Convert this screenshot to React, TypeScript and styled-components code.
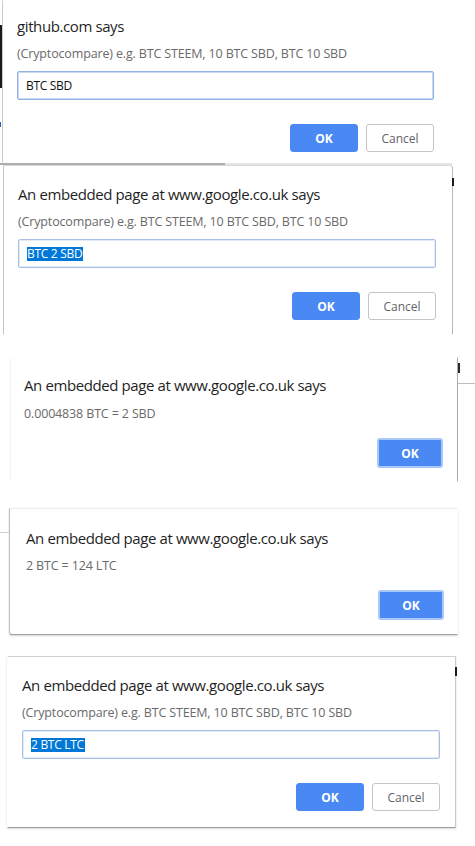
import React from 'react';
import styled, { createGlobalStyle } from 'styled-components';

const GlobalStyle = createGlobalStyle`
  html, body { margin: 0; padding: 0; background: #ffffff; }
  body { font-family: "Open Sans", "Noto Sans", sans-serif; }
`;

const Page = styled.div`
  width: 475px;
  height: 846px;
  overflow: hidden;
  background: #ffffff;
  display: flex;
  flex-direction: column;
`;

type DialogProps = {
  $x: number;
  $w: number;
  $pt: number;
  $pr: number;
  $pb: number;
  $pl: number;
  $mt?: number;
  $bt?: string;
  $br?: string;
  $bb?: string;
  $bl?: string;
  $radius?: string;
  $shadow?: string;
};

const Dialog = styled.div<DialogProps>`
  position: relative;
  flex-shrink: 0;
  box-sizing: border-box;
  display: flex;
  flex-direction: column;
  margin-left: ${(p) => p.$x}px;
  margin-top: ${(p) => p.$mt ?? 0}px;
  width: ${(p) => p.$w}px;
  padding: ${(p) => `${p.$pt}px ${p.$pr}px ${p.$pb}px ${p.$pl}px`};
  border: 1px solid transparent;
  border-color: ${(p) =>
    `${p.$bt ?? 'transparent'} ${p.$br ?? 'transparent'} ${p.$bb ?? 'transparent'} ${p.$bl ?? 'transparent'}`};
  border-radius: ${(p) => p.$radius ?? '0'};
  box-shadow: ${(p) => p.$shadow ?? 'none'};
  background: #ffffff;
`;

const Title = styled.div`
  font-size: 15px;
  letter-spacing: -0.4px;
  line-height: 20px;
  height: 20px;
  color: #1f1f1f;
  white-space: nowrap;
`;

const Message = styled.div<{ $mt: number }>`
  margin-top: ${(p) => p.$mt}px;
  font-size: 12.5px;
  letter-spacing: -0.15px;
  line-height: 18px;
  height: 18px;
  color: #6a6a6a;
  white-space: nowrap;
`;

const Field = styled.div<{ $strong?: boolean }>`
  margin-top: 8px;
  box-sizing: border-box;
  height: 29px;
  display: flex;
  align-items: center;
  padding-left: 8px;
  border: 1px solid ${(p) => (p.$strong ? '#93b2e6' : '#a7c0e8')};
  border-radius: 2px;
  box-shadow: ${(p) => (p.$strong ? 'inset 0 0 0 1px #c9d9f3' : 'inset 0 0 0 1px #e3ebf8')};
  font-size: 12px;
  letter-spacing: -0.3px;
  color: #111111;
  white-space: nowrap;
`;

const Selected = styled.span`
  background: #0078d7;
  color: #ffffff;
  line-height: 14px;
  padding-right: 1px;
`;

const ButtonRow = styled.div<{ $mt: number }>`
  margin-top: ${(p) => p.$mt}px;
  display: flex;
  justify-content: flex-end;
  gap: 8px;
`;

const Button = styled.div<{ $primary?: boolean; $focused?: boolean }>`
  box-sizing: border-box;
  width: ${(p) => (p.$focused ? 66 : 68)}px;
  height: ${(p) => (p.$focused ? 30 : 28)}px;
  display: flex;
  align-items: center;
  justify-content: center;
  border-radius: 3px;
  font-size: 12px;
  font-weight: ${(p) => (p.$primary ? 700 : 400)};
  color: ${(p) => (p.$primary ? '#ffffff' : '#5f6368')};
  background: ${(p) => (p.$primary ? '#4a89f3' : '#ffffff')};
  border: ${(p) =>
    p.$focused ? '2px solid #a9c8fa' : p.$primary ? '1px solid #4a89f3' : '1px solid #c6c6c6'};
`;

const Divider = styled.div`
  flex-shrink: 0;
  height: 2px;
  width: 475px;
  background: linear-gradient(
    to right,
    #adadad 0,
    #adadad 225px,
    #e6e6e6 225px,
    #e6e6e6 452px,
    #ffffff 452px
  );
`;

const Scrap = styled.div<{ $c: string }>`
  position: absolute;
  background: ${(p) => p.$c};
`;

const scrap = (left: number, top: number, w: number, h: number) => ({
  left: `${left}px`,
  top: `${top}px`,
  width: `${w}px`,
  height: `${h}px`,
});

const PROMPT_HINT = '(Cryptocompare) e.g. BTC STEEM, 10 BTC SBD, BTC 10 SBD';
const EMBEDDED = 'An embedded page at www.google.co.uk says';

export default function App() {
  return (
    <>
      <GlobalStyle />
      <Page>
        <Dialog $x={2} $w={451} $pt={15} $pr={18} $pb={10} $pl={14} $bl="#c9c9c9">
          <Scrap $c="#1b1b1b" style={scrap(-3, 24, 2, 63)} />
          <Scrap $c="#2b5fa8" style={scrap(-3, 121, 1, 5)} />
          <Title>github.com says</Title>
          <Message $mt={9}>{PROMPT_HINT}</Message>
          <Field $strong>BTC SBD</Field>
          <ButtonRow $mt={24}>
            <Button $primary>OK</Button>
            <Button>Cancel</Button>
          </ButtonRow>
        </Dialog>
        <Divider />
        <Dialog
          $x={3}
          $w={450}
          $pt={18}
          $pr={16}
          $pb={14}
          $pl={14}
          $bt="#d9d9d9"
          $br="#b9b9b9"
          $bl="#c6c6c6"
          $radius="0 3px 0 0"
        >
          <Scrap $c="#1b1b1b" style={scrap(448, 12, 2, 8)} />
          <Title>{EMBEDDED}</Title>
          <Message $mt={9}>{PROMPT_HINT}</Message>
          <Field>
            <Selected>BTC 2 SBD</Selected>
          </Field>
          <ButtonRow $mt={24}>
            <Button $primary>OK</Button>
            <Button>Cancel</Button>
          </ButtonRow>
        </Dialog>
        <Dialog
          $mt={22}
          $x={10}
          $w={448}
          $pt={17}
          $pr={14}
          $pb={13}
          $pl={13}
          $br="#a9a9a9"
          $bl="#f3f3f3"
        >
          <Scrap $c="#2a2a2a" style={scrap(447, 5, 2, 10)} />
          <Scrap $c="#bdbdbd" style={scrap(447, 25, 18, 1)} />
          <Title>{EMBEDDED}</Title>
          <Message $mt={10}>0.0004838 BTC = 2 SBD</Message>
          <ButtonRow $mt={15}>
            <Button $primary $focused>
              OK
            </Button>
          </ButtonRow>
        </Dialog>
        <Dialog
          $mt={26}
          $x={9}
          $w={449}
          $pt={19}
          $pr={13}
          $pb={14}
          $pl={16}
          $bt="#ededed"
          $bb="#a3a3a3"
          $bl="#bdbdbd"
          $radius="0 0 0 3px"
          $shadow="0 1px 2px rgba(0,0,0,0.18)"
        >
          <Scrap $c="#cfcfcf" style={scrap(-10, 23, 9, 1)} />
          <Title>{EMBEDDED}</Title>
          <Message $mt={9}>2 BTC = 124 LTC</Message>
          <ButtonRow $mt={15}>
            <Button $primary $focused>
              OK
            </Button>
          </ButtonRow>
        </Dialog>
        <Dialog
          $mt={21}
          $x={7}
          $w={449}
          $pt={18}
          $pr={15}
          $pb={16}
          $pl={14}
          $bt="#d2d2d2"
          $br="#c9c9c9"
          $bb="#9c9c9c"
          $shadow="0 1px 2px rgba(0,0,0,0.15)"
        >
          <Scrap $c="#1b1b1b" style={scrap(447, 10, 2, 9)} />
          <Title>{EMBEDDED}</Title>
          <Message $mt={9}>{PROMPT_HINT}</Message>
          <Field>
            <Selected>2 BTC LTC</Selected>
          </Field>
          <ButtonRow $mt={24}>
            <Button $primary>OK</Button>
            <Button>Cancel</Button>
          </ButtonRow>
        </Dialog>
      </Page>
    </>
  );
}
